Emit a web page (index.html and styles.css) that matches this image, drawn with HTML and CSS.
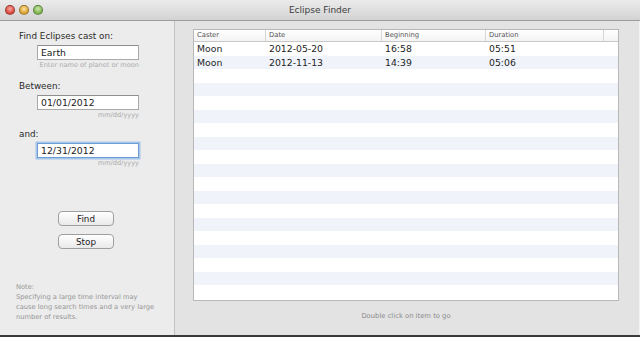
FILE: index.html
```html
<!DOCTYPE html>
<html lang="en">
<head>
    <meta charset="UTF-8">
    <title>Eclipse Finder</title>
    <link rel="stylesheet" href="styles.css">
</head>
<body>
<div class="window">
    <div class="titlebar">
        <div class="lights">
            <span class="light red"></span>
            <span class="light yellow"></span>
            <span class="light green"></span>
        </div>
        <div class="title">Eclipse Finder</div>
    </div>

    <div class="content">
        <div class="sidebar">
            <div class="label">Find Eclipses cast on:</div>
            <div class="field"><input type="text" class="textInput" value="Earth"></div>
            <div class="hint">Enter name of planet or moon</div>

            <div class="label second">Between:</div>
            <div class="field"><input type="text" class="textInput" value="01/01/2012"></div>
            <div class="hint">mm/dd/yyyy</div>

            <div class="label third">and:</div>
            <div class="field"><input type="text" class="textInput focused" value="12/31/2012"></div>
            <div class="hint">mm/dd/yyyy</div>

            <div class="buttons">
                <button class="btn">Find</button>
                <button class="btn">Stop</button>
            </div>

            <div class="note">
                Note:<br>
                Specifying a large time interval may cause long search times and a very large number of results.
            </div>
        </div>

        <div class="main">
            <div class="table">
                <div class="thead">
                    <div class="col c1">Caster</div>
                    <div class="col c2">Date</div>
                    <div class="col c3">Beginning</div>
                    <div class="col c4">Duration</div>
                    <div class="col c5"></div>
                </div>
                <div class="tbody" id="rows">
                    <div class="row">
                        <div class="col c1">Moon</div>
                        <div class="col c2">2012-05-20</div>
                        <div class="col c3">16:58</div>
                        <div class="col c4">05:51</div>
                    </div>
                    <div class="row">
                        <div class="col c1">Moon</div>
                        <div class="col c2">2012-11-13</div>
                        <div class="col c3">14:39</div>
                        <div class="col c4">05:06</div>
                    </div>
                    <div class="row"></div><div class="row"></div><div class="row"></div>
                    <div class="row"></div><div class="row"></div><div class="row"></div>
                    <div class="row"></div><div class="row"></div><div class="row"></div>
                    <div class="row"></div><div class="row"></div><div class="row"></div>
                    <div class="row"></div><div class="row"></div><div class="row"></div>
                    <div class="row"></div><div class="row"></div>
                </div>
            </div>
            <div class="status">Double click on item to go</div>
        </div>
    </div>
    <div class="bottomEdge"></div>
</div>
</body>
</html>
```

FILE: styles.css
```css
body {
    margin: 0;
    padding: 0;
    width: 640px;
    height: 337px;
    overflow: hidden;
    font-family: "DejaVu Sans", "Liberation Sans", sans-serif;
    background: #3a3a3a;
}

.window {
    display: flex;
    flex-direction: column;
    height: 337px;
}

/* title bar */
.titlebar {
    height: 20px;
    display: flex;
    align-items: center;
    position: relative;
    background: linear-gradient(#ebebeb, #d3d3d3);
    border-bottom: 1px solid #9c9c9c;
}
.lights {
    display: flex;
    gap: 4px;
    padding-left: 5px;
}
.light {
    width: 10px;
    height: 10px;
    border-radius: 50%;
    box-sizing: border-box;
    border: 1px solid rgba(0, 0, 0, 0.3);
}
.red { background: radial-gradient(circle at 50% 35%, #f7a8a0, #d8453c 70%); }
.yellow { background: radial-gradient(circle at 50% 35%, #fbe3a2, #d9a02c 70%); }
.green { background: radial-gradient(circle at 50% 35%, #cfe8a8, #7bb24e 70%); }
.title {
    position: absolute;
    left: 0;
    right: 0;
    text-align: center;
    font-size: 9px;
    color: #3c3c3c;
}

.content {
    display: flex;
    height: 314px;
}

/* left side */
.sidebar {
    width: 175px;
    background: #ececec;
    border-right: 1px solid #c2c2c2;
    padding: 10px 0 0 19px;
    box-sizing: border-box;
    position: relative;
}
.label {
    font-size: 8.8px;
    color: #2a2a2a;
    height: 14px;
}
.label.second { margin-top: 10px; }
.label.third { margin-top: 8px; }
.field {
    padding-left: 18px;
}
.textInput {
    width: 102px;
    height: 15px;
    box-sizing: border-box;
    border: 1px solid #a9a9a9;
    border-top-color: #8e8e8e;
    padding: 0 3px;
    font-family: "DejaVu Sans", sans-serif;
    font-size: 9.3px;
    color: #222;
    background: #fff;
    margin: 0;
    display: block;
}
.textInput.focused {
    border-color: #6f9ed6;
    box-shadow: 0 0 0 1.5px #a6c6ec;
}
.hint {
    width: 120px;
    text-align: right;
    font-size: 6.6px;
    color: #ababab;
    height: 11px;
    line-height: 11px;
}

.buttons {
    display: flex;
    flex-direction: column;
    gap: 8px;
    padding: 42px 0 0 39px;
}
.btn {
    width: 56px;
    height: 15px;
    border: 1px solid #9f9f9f;
    border-radius: 4px;
    background: linear-gradient(#ffffff, #e9e9e9);
    font-family: "DejaVu Sans", sans-serif;
    font-size: 8.8px;
    color: #222;
    padding: 0;
}

.note {
    position: absolute;
    left: 16px;
    top: 261px;
    width: 142px;
    font-size: 6.7px;
    line-height: 10px;
    color: #959595;
}

/* right side */
.main {
    flex: 1;
    background: #e3e3e3;
    padding: 8px 0 0 18px;
    border-right: 1px solid #f2f2f2;
}
.table {
    width: 426px;
    border: 1px solid #b8b8b8;
    box-sizing: border-box;
    background: #fff;
}
.thead {
    display: flex;
    height: 11px;
    border-bottom: 1px solid #c8c8c8;
    background: linear-gradient(#ffffff, #f3f3f3);
    font-size: 6.8px;
    color: #555;
    line-height: 11px;
}
.thead .col {
    border-right: 1px solid #d6d6d6;
}
.col {
    padding-left: 3px;
    box-sizing: border-box;
    overflow: hidden;
    white-space: nowrap;
}
.c1 { width: 72px; }
.c2 { width: 116px; }
.c3 { width: 104px; }
.c4 { width: 118px; }
.c5 { flex: 1; border-right: none !important; }

.tbody {
    height: 258px;
    overflow: hidden;
}
.row {
    display: flex;
    height: 13.5px;
    line-height: 13.5px;
    font-size: 9.3px;
    color: #1e1e1e;
}
.row:nth-child(even) {
    background: #f0f4fa;
}

.status {
    width: 426px;
    text-align: center;
    font-size: 6.8px;
    color: #8a8a8a;
    padding-top: 11px;
}

.bottomEdge {
    height: 2px;
    background: #3a3a3a;
}
```
